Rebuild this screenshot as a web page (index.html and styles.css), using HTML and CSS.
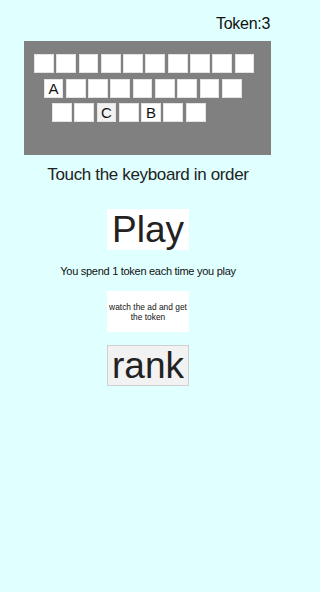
FILE: index.html
```html
<!DOCTYPE html>
<html>
<head>
<meta charset="utf-8">
<link rel="stylesheet" href="styles.css">
</head>
<body>
<div class="header"><span class="token">Token:3</span></div>
<div class="panel">
  <div class="row row1">
    <div class="key"></div><div class="key"></div><div class="key"></div><div class="key"></div><div class="key"></div>
    <div class="key"></div><div class="key"></div><div class="key"></div><div class="key"></div><div class="key"></div>
  </div>
  <div class="row row2">
    <div class="key">A</div><div class="key"></div><div class="key"></div><div class="key"></div><div class="key"></div>
    <div class="key"></div><div class="key"></div><div class="key"></div><div class="key"></div>
  </div>
  <div class="row row3">
    <div class="key"></div><div class="key"></div><div class="key pressed">C</div><div class="key"></div><div class="key">B</div>
    <div class="key"></div><div class="key"></div>
  </div>
</div>
<p class="hint">Touch the keyboard in order</p>
<div class="btn btn-big">Play</div>
<p class="note">You spend 1 token each time you play</p>
<div class="btn btn-ad">watch the ad and get the token</div>
<div class="btn btn-big btn-rank">rank</div>
</body>
</html>
```
FILE: styles.css
```css
html, body {
  margin: 0;
  padding: 0;
}
body {
  background: #e0ffff;
  font-family: "Liberation Sans", Arial, sans-serif;
  color: #222;
  width: 296px;
  min-height: 592px;
}
.header {
  box-sizing: border-box;
  height: 41px;
  padding: 15px 26px 0 0;
  display: flex;
  justify-content: flex-end;
}
.token {
  font-size: 16px;
  line-height: 18px;
  letter-spacing: -0.3px;
  color: #111;
}
.panel {
  box-sizing: border-box;
  margin: 0 25px 0 24px;
  height: 114px;
  background: #808080;
  padding: 13px 0 0 10px;
  display: flex;
  flex-direction: column;
  gap: 5.5px;
}
.row {
  display: flex;
  gap: 2.5px;
}
.row2 { padding-left: 9.5px; }
.row3 { padding-left: 18px; }
.key {
  box-sizing: border-box;
  width: 19.8px;
  height: 19px;
  background: #fff;
  border: 1px solid #e4e4e4;
  font-size: 15px;
  line-height: 17px;
  text-align: center;
  color: #111;
}
.key.pressed {
  background: #f2f2f2;
}
.hint {
  margin: 8.5px 0 0;
  font-size: 17px;
  line-height: 21px;
  letter-spacing: -0.35px;
  text-align: center;
}
.btn {
  box-sizing: border-box;
  width: 82px;
  height: 41px;
  margin: 0 auto;
  background: #fff;
  display: flex;
  align-items: center;
  justify-content: center;
  text-align: center;
}
.btn-big {
  margin-top: 24.5px;
  font-size: 37px;
  color: #222;
}
.note {
  margin: 14.5px 0 0;
  font-size: 11px;
  line-height: 13px;
  letter-spacing: -0.28px;
  text-align: center;
  color: #111;
}
.btn-ad {
  margin-top: 13.5px;
  font-size: 8.4px;
  line-height: 10px;
  padding: 0;
  color: #111;
}
.btn-rank {
  margin-top: 13px;
  background: #f2f2f2;
  border: 1px solid #cfcfcf;
}
```
